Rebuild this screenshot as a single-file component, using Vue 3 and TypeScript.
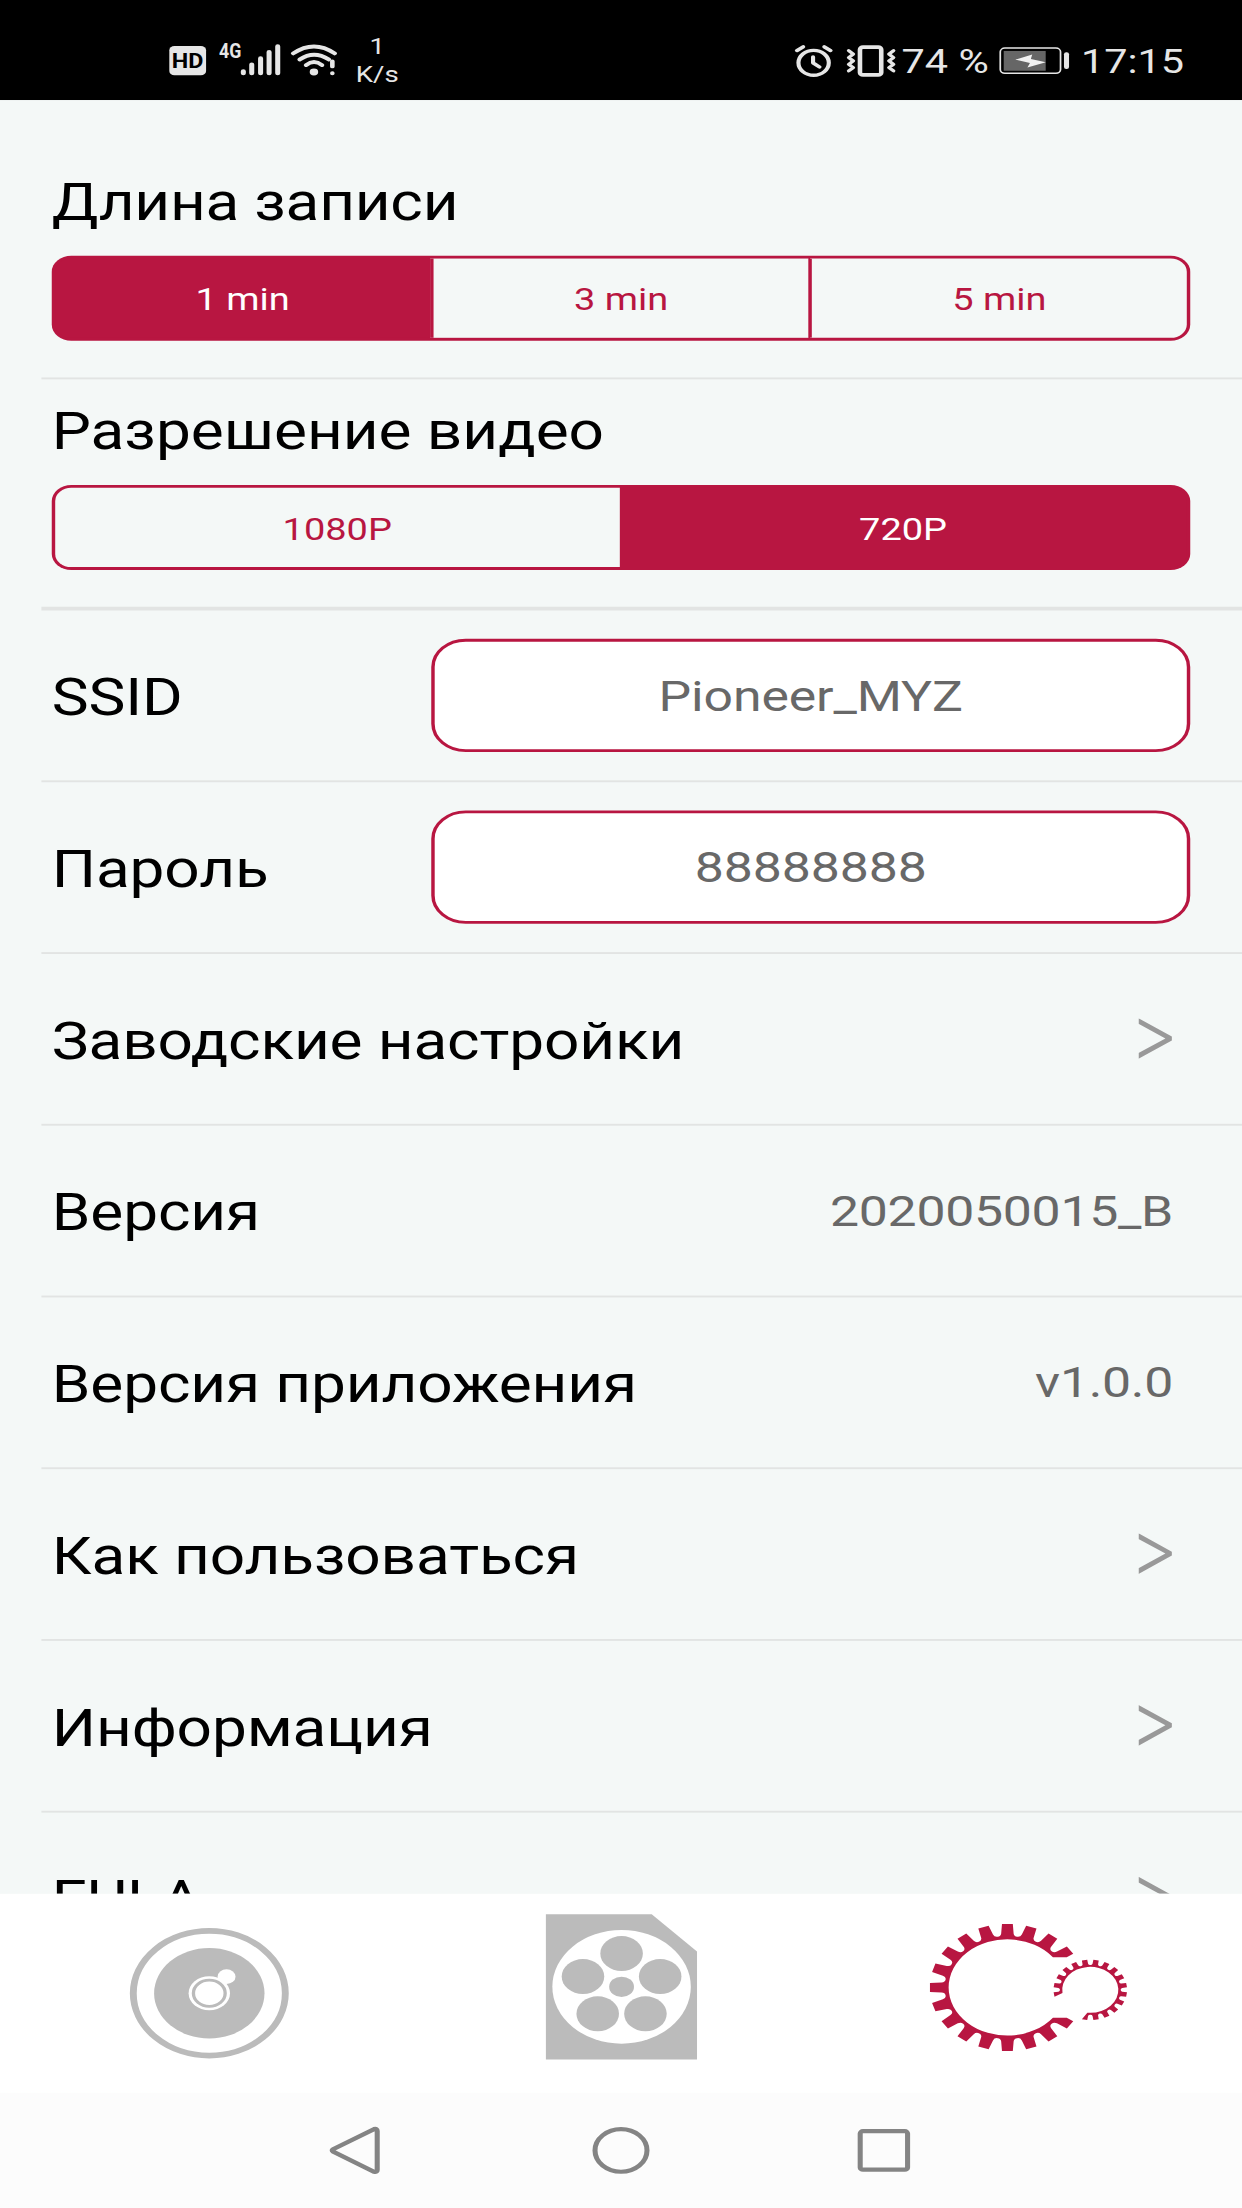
<script setup lang="ts">
import { ref } from 'vue'

interface Choice {
  title: string
  options: string[]
  selected: number
}

interface Field {
  label: string
  value: string
}

interface Row {
  label: string
  value?: string
}

const choices = ref<Choice[]>([
  { title: 'Длина записи', options: ['1 min', '3 min', '5 min'], selected: 0 },
  { title: 'Разрешение видео', options: ['1080P', '720P'], selected: 1 },
])

const fields: Field[] = [
  { label: 'SSID', value: 'Pioneer_MYZ' },
  { label: 'Пароль', value: '88888888' },
]

const rows: Row[] = [
  { label: 'Заводские настройки' },
  { label: 'Версия', value: '2020050015_B' },
  { label: 'Версия приложения', value: 'v1.0.0' },
  { label: 'Как пользоваться' },
  { label: 'Информация' },
  { label: 'EULA' },
]

// Angles are in degrees, clockwise from twelve o'clock.
function polar(radius: number, angle: number): string {
  const a = (angle * Math.PI) / 180
  return `${(radius * Math.sin(a)).toFixed(2)} ${(-radius * Math.cos(a)).toFixed(2)}`
}

interface GearShape {
  tip: number
  neck: number
  root: number
  tipHalf: number
  neckHalf: number
}

// Outline of consecutive gear teeth, 18 degrees apart, with rounded valleys.
function teeth(first: number, last: number, g: GearShape): string {
  const parts: string[] = []
  for (let a = first; a <= last; a += 18) {
    if (a > first) parts.push(`L${polar(g.neck, a - g.neckHalf)}`)
    parts.push(`L${polar(g.tip, a - g.tipHalf)}L${polar(g.tip, a + g.tipHalf)}`)
    if (a < last) {
      parts.push(`L${polar(g.neck, a + g.neckHalf)}`)
      parts.push(`Q${polar(g.root, a + g.neckHalf + 0.6)} ${polar(g.root, a + 9)}`)
      parts.push(`Q${polar(g.root, a + 18 - g.neckHalf - 0.6)} ${polar(g.neck, a + 18 - g.neckHalf)}`)
    }
  }
  return parts.join('')
}

const bigGear =
  'M39.6 32L51.6 32' +
  teeth(126, 414, { tip: 67.5, neck: 57.5, root: 54.4, tipHalf: 4, neckHalf: 5.4 }) +
  'L51.6 -32L39.6 -32A51 51 0 1 0 39.6 32Z'

const smallGear =
  'M-24.2 3.4' +
  teeth(-99, 189, { tip: 32, neck: 27.8, root: 26.4, tipHalf: 4.2, neckHalf: 5 }) +
  'L-2.6 24.4L0 24.4A24.4 24.4 0 1 0 -24.2 3.4Z'

const holes = [0, 72, 144, 216, 288].map((deg) => {
  const a = (deg * Math.PI) / 180
  return { x: 35.3 * Math.sin(a), y: -35.3 * Math.cos(a) }
})
</script>

<template>
  <div class="viewport">
    <div class="screen">
      <header class="status">
        <svg class="s-hd" width="33" height="50" viewBox="147 40 33 50">
          <rect x="147.2" y="48.7" width="32" height="31" rx="4.5" fill="#e6e6e6" />
          <text x="163.2" y="71.8" class="hd" text-anchor="middle" textLength="27.5" lengthAdjust="spacingAndGlyphs">HD</text>
        </svg>
        <svg class="s-signal" width="55" height="50" viewBox="190 40 55 50">
          <text x="190.4" y="61.7" class="net" textLength="19.4" lengthAdjust="spacingAndGlyphs">4G</text>
          <g stroke="#e6e6e6" stroke-width="4.4" stroke-linecap="round">
            <path d="M211.6 75.6V77.6M218.9 68.4V77.6M226.6 61.9V77.6M234 55.2V77.6M241.5 49.2V77.6" />
          </g>
        </svg>
        <svg class="s-wifi" width="41" height="50" viewBox="252 40 41 50">
          <g fill="none" stroke="#e6e6e6" stroke-width="4" stroke-linecap="round">
            <path d="M255 56.6Q273 41.8 291 56.6" />
            <path d="M260.6 63Q273 53 286 63" />
            <path d="M266.2 69Q273 62.6 280 69" />
            <path d="M289 65V70.4M289 77.6V77.7" />
          </g>
          <circle cx="273" cy="76.2" r="3.7" fill="#e6e6e6" />
        </svg>
        <div class="speed"><span>1</span><span>K/s</span></div>
        <span class="spacer" />
        <svg class="s-alarm" width="36" height="50" viewBox="690 40 36 50">
          <g fill="none" stroke="#e6e6e6" stroke-width="3.6" stroke-linecap="round" stroke-linejoin="round">
            <circle cx="707.5" cy="66.6" r="13.2" />
            <path d="M693 53.6L698.4 49.6M722.2 53.6L716.8 49.6M707 60.4V66.6L712.6 71" />
          </g>
        </svg>
        <svg class="s-vibrate" width="46" height="50" viewBox="734 40 46 50">
          <g fill="none" stroke="#e6e6e6" stroke-linecap="round" stroke-linejoin="round">
            <rect x="747.8" y="50" width="18.5" height="29.4" rx="2.6" stroke-width="4" />
            <path
              stroke-width="3.2"
              d="M738 53.6L742 57.4L738 61L742 64.6L738 68.2L742 71.6L738 75.2M777 53.6L773 57.4L777 61L773 64.6L777 68.2L773 71.6L777 75.2"
            />
          </g>
        </svg>
        <span class="percent">74 %</span>
        <svg class="s-battery" width="63" height="50" viewBox="868 40 63 50">
          <rect x="869.8" y="50.9" width="52.4" height="26.8" rx="4" fill="none" stroke="#e6e6e6" stroke-width="1.5" />
          <rect x="872.8" y="54" width="36.5" height="21" fill="#666" />
          <rect x="925.2" y="55.5" width="4.4" height="17.6" rx="2" fill="#e6e6e6" />
          <path d="M882.9 63.2L897.6 57.8L896.4 62.4L909.4 66.1L893.4 71.6L895.6 66.8Z" fill="#f2f2f2" />
        </svg>
        <span class="clock">17:15</span>
      </header>

      <main class="settings">
        <section v-for="choice in choices" :key="choice.title" class="choice">
          <h2>{{ choice.title }}</h2>
          <div class="segments">
            <button
              v-for="(option, i) in choice.options"
              :key="option"
              type="button"
              :class="{ active: i === choice.selected }"
              @click="choice.selected = i"
            >
              {{ option }}
            </button>
          </div>
        </section>

        <div v-for="field in fields" :key="field.label" class="row">
          <span class="label">{{ field.label }}</span>
          <div class="field">{{ field.value }}</div>
        </div>

        <div v-for="row in rows" :key="row.label" class="row">
          <span class="label">{{ row.label }}</span>
          <span v-if="row.value" class="value">{{ row.value }}</span>
          <svg v-else class="chevron" width="30" height="44" viewBox="0 0 30 44">
            <path d="M0 0L29 19.4V23.6L0 43V37L23.4 21.5L0 6Z" fill="#999" />
          </svg>
        </div>
      </main>

      <nav class="tabs">
        <div class="tab">
          <svg width="144" height="144" viewBox="-74 -72.4 144 144">
            <circle r="66.1" fill="none" stroke="#bbb" stroke-width="6" />
            <circle r="48" fill="#bbb" />
            <circle r="18" fill="#fff" />
            <circle cx="15" cy="-17.6" r="7.8" fill="#fff" />
            <circle r="13.8" fill="#fff" stroke="#bbb" stroke-width="2.9" />
          </svg>
        </div>
        <div class="tab">
          <svg width="144" height="172" viewBox="-72.5 -79.6 144 172">
            <path d="M-65.8 -77H26.2L65.6 -37.4V77H-65.8Z" fill="#bbb" />
            <circle r="60.2" fill="#fff" />
            <circle v-for="(hole, i) in holes" :key="i" :cx="hole.x" :cy="hole.y" r="18.5" fill="#bbb" />
            <circle r="10.8" fill="#bbb" />
          </svg>
        </div>
        <div class="tab">
          <svg width="180" height="144" viewBox="-66.5 -66.3 180 144" overflow="visible">
            <g transform="translate(-0.5 0)" fill="#b81641">
              <path :d="bigGear" />
              <path :d="smallGear" transform="translate(72.1 2.5)" />
            </g>
          </svg>
        </div>
      </nav>

      <footer class="keys">
        <svg width="60" height="60" viewBox="-29.8 -30 60 60">
          <path d="M-20.2 -1.2L15.4 -22.6Q18.2 -23.4 18.2 -20.6V20.6Q18.2 23.4 15.4 22.6L-20.2 1.2Q-21.4 0 -20.2 -1.2Z" />
        </svg>
        <svg width="60" height="60" viewBox="-30 -30 60 60"><circle r="22.6" /></svg>
        <svg width="60" height="60" viewBox="-28.6 -30 60 60">
          <rect x="-20.6" y="-20.4" width="41.2" height="40.8" rx="2.4" />
        </svg>
      </footer>
    </div>
  </div>
</template>

<style>
body {
  margin: 0;
  background: #fcfcfc;
}
</style>

<style scoped>
.viewport {
  width: 1242px;
  height: 2208px;
  overflow: hidden;
}

.screen {
  display: flex;
  flex-direction: column;
  width: 1080px;
  height: 2340px;
  transform: scale(1.15, 0.94359);
  transform-origin: 0 0;
  font-family: Roboto, 'Noto Sans', sans-serif;
  color: #000;
  background: #f4f8f7;
}

.status {
  display: flex;
  flex: none;
  box-sizing: border-box;
  height: 105.7px;
  padding: 40px 0 0 147px;
  background: #000;
  color: #e6e6e6;
}

.status svg {
  flex: none;
}

.hd {
  font: 700 21px Roboto, sans-serif;
  fill: #000;
}

.net {
  font: 700 20.5px Roboto, sans-serif;
  fill: #e6e6e6;
}

.s-signal {
  margin-left: 10px;
}

.s-wifi {
  margin-left: 7px;
}

.speed {
  display: flex;
  flex-direction: column;
  align-items: center;
  width: 40px;
  margin: -5px 0 0 15px;
  font-size: 24px;
  line-height: 29.6px;
}

.spacer {
  flex: 1;
}

.s-vibrate {
  margin-left: 8px;
}

.percent,
.clock {
  flex: none;
  font-size: 36px;
  line-height: 50px;
  white-space: nowrap;
}

.percent {
  width: 80px;
  margin-left: 4px;
}

.s-battery {
  margin-left: 4px;
}

.clock {
  width: 140px;
  margin-left: 9px;
}

.settings {
  display: flex;
  flex-direction: column;
  height: 1901.5px;
  flex: none;
  overflow: hidden;
  padding-left: 36px;
}

.choice {
  flex: none;
  padding: 24px 45px 39.2px 9px;
  border-bottom: 4px solid #e2e4e3;
}

.choice:first-child {
  padding-top: 77px;
  padding-bottom: 39px;
  border-bottom-width: 2px;
}

h2 {
  margin: 0 0 24px;
  font-size: 54px;
  font-weight: 400;
  line-height: 64px;
}

.choice:first-child h2 {
  letter-spacing: -0.2px;
}

.segments {
  display: flex;
  box-sizing: border-box;
  height: 90px;
  padding: 3px;
  border-radius: 17px;
  background: #b81641;
}

.segments button {
  flex: 1;
  padding: 3px 0 0;
  border: 0;
  background: #f4f8f7;
  color: #b81641;
  font: 400 33px/81px Roboto, 'Noto Sans', sans-serif;
}

.segments button:first-child {
  border-radius: 14px 0 0 14px;
}

.segments button:last-child {
  border-radius: 0 14px 14px 0;
}

/* The divider stays square even where the last button is rounded. */
.segments button + button {
  border-left: 3px solid #b81641;
}

.segments button.active {
  background: #b81641;
  color: #fff;
}

.segments button + button.active {
  text-indent: -3px;
}

.row {
  display: flex;
  flex: none;
  align-items: center;
  justify-content: space-between;
  height: 180px;
  padding: 0 60px 0 9px;
  border-bottom: 2px solid #e2e4e3;
}

.label {
  padding-top: 6px;
  font-size: 54px;
  line-height: 64px;
  letter-spacing: -0.1px;
  white-space: nowrap;
}

.value {
  padding-top: 2px;
  color: #686868;
  font-size: 45px;
  letter-spacing: -0.25px;
}

.field {
  box-sizing: border-box;
  width: 660px;
  height: 120px;
  margin-right: -15px;
  padding-top: 1px;
  border: 3px solid #b81641;
  border-radius: 30px;
  background: #fff;
  color: #686868;
  font-size: 45px;
  line-height: 114px;
  letter-spacing: -0.1px;
  text-align: center;
}

.chevron {
  flex: none;
}

.tabs {
  display: flex;
  flex: none;
  height: 210.6px;
  background: #fff;
}

.tab {
  display: flex;
  flex: 1;
  align-items: center;
  justify-content: center;
}

.keys {
  display: flex;
  flex: 1;
  align-items: center;
  justify-content: center;
  gap: 170px;
  background: #fcfcfc;
}

.keys svg {
  fill: none;
  stroke: #848484;
  stroke-width: 4.4;
}
</style>
